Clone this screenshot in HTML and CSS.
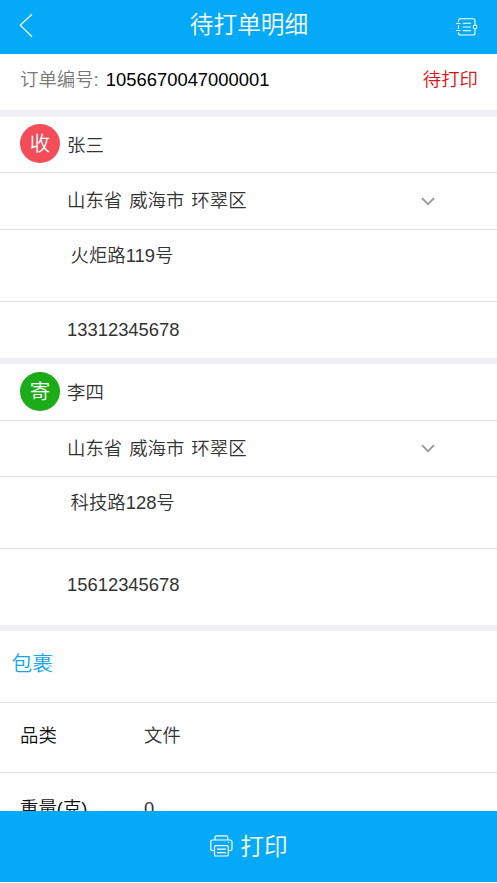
FILE: index.html
```html
<!DOCTYPE html>
<html lang="zh-CN">
<head>
<meta charset="utf-8">
<meta name="viewport" content="width=device-width, initial-scale=1">
<title>待打单明细</title>
<link rel="stylesheet" href="styles.css">
</head>
<body>
<div class="app">
  <header class="navbar">
    <svg class="back" viewBox="0 0 14 25"><path d="M13 1.2 1.2 12.3 13 23.8"/></svg>
    <h1 class="title">待打单明细</h1>
    <svg class="book" viewBox="0 0 22 18"><path d="M2.5 4V2.5Q2.5 .8 4.5 .8H17Q19 .8 19 2.8V6.8M19 11V15Q19 17 17 17H4.5Q2.5 17 2.5 15V14M2.5 7V11M.2 5.5H4.5M.2 12.5H4.5M6.7 5.3H15M6.7 9H15M6.7 12.7H15"/><circle cx="19" cy="8.9" r="1.8"/></svg>
  </header>
  <main class="content">
    <section class="order">
      <div class="order-id"><span class="label">订单编号:</span> <span class="number">1056670047000001</span></div>
      <span class="status">待打印</span>
    </section>
    <section class="contact">
      <div class="row name"><span class="badge receive">收</span><span>张三</span></div>
      <div class="row region"><span>山东省 威海市 环翠区</span><svg class="chevron" viewBox="0 0 14 9"><path d="M1 1.2 7 7.2 13 1.2"/></svg></div>
      <div class="row street">火炬路119号</div>
      <div class="row phone">13312345678</div>
    </section>
    <section class="contact sender">
      <div class="row name"><span class="badge send">寄</span><span>李四</span></div>
      <div class="row region"><span>山东省 威海市 环翠区</span><svg class="chevron" viewBox="0 0 14 9"><path d="M1 1.2 7 7.2 13 1.2"/></svg></div>
      <div class="row street">科技路128号</div>
      <div class="row phone">15612345678</div>
    </section>
    <section class="parcel">
      <h2 class="parcel-title">包裹</h2>
      <div class="field"><span class="key">品类</span><span>文件</span></div>
      <div class="field weight"><span class="key">重量(克)</span><span>0</span></div>
    </section>
  </main>
  <footer class="print">
    <svg class="printer" viewBox="0 0 23 22"><path d="M5 5V2.5Q5 .8 6.8 .8H16Q17.8 .8 17.8 2.5V5M4.5 15.5H2.5Q.8 15.5 .8 13.8V7Q.8 5 2.8 5H20Q22 5 22 7V13.8Q22 15.5 20.3 15.5H18.3M4.5 12Q4.5 10.7 5.8 10.7H17Q18.3 10.7 18.3 12V19.7Q18.3 21 17 21H5.8Q4.5 21 4.5 19.7ZM7 14.2H16M7 17.6H16M18 7.5H19.2"/></svg>
    <span>打印</span>
  </footer>
</div>
</body>
</html>
```
FILE: styles.css
```css
* { box-sizing: border-box; }
body {
  margin: 0;
  background: #fff;
  color: #333;
  font: 350 18.4px/28px "Liberation Sans", "Noto Sans CJK SC", sans-serif;
}
svg { flex: none; fill: none; stroke: #fff; }
.app { display: flex; flex-direction: column; height: 882px; overflow: hidden; }
.navbar {
  display: flex;
  flex: none;
  align-items: center;
  justify-content: space-between;
  height: 54px;
  padding: 0 19px 4px 19px;
  background: #04a9f8;
  color: #fff;
}
.back { width: 14px; height: 25px; stroke-width: 1.2; }
.title { margin: 0 0 0 9px; font-size: 23.7px; font-weight: 350; line-height: 34px; }
.book { width: 22px; height: 18px; margin-top: 3px; stroke-width: 1.1; }
.content { flex: 1; min-height: 0; overflow: hidden; }
.order { display: flex; justify-content: space-between; height: 56px; padding: 12px 19px 0 20px; }
.order-id { word-spacing: 2px; }
.label { color: #777; }
.number { color: #000; }
.status { color: #e60c13; }
.contact, .parcel { border-top: 7px solid #efeff4; }
.row { display: flex; align-items: center; height: 57px; padding-left: 67px; border-bottom: 1px solid #e4e4e6; }
.name { height: 56px; padding: 2px 0 0 20px; }
.badge {
  width: 40px;
  height: 39px;
  margin: 0 7px 4px 0;
  border-radius: 50%;
  color: #fff;
  font-size: 20.5px;
  line-height: 39px;
  text-align: center;
}
.receive { background: #f44d5a; }
.send { background: #1cac19; }
.region { justify-content: space-between; padding-right: 62px; word-spacing: 1.9px; }
.chevron { width: 14px; height: 9px; stroke: #999; stroke-width: 1.9; }
.street { align-items: flex-start; height: 72px; padding: 12px 0 0 70.5px; }
.phone { height: 56px; border: 0; }
.sender { border-top-width: 6px; }
.sender .name { height: 57px; }
.sender .region { height: 56px; }
.sender .phone { height: 76px; padding-bottom: 4px; }
.parcel { border-top-width: 6px; }
.parcel-title {
  height: 72px;
  margin: 0;
  padding: 19px 0 0 11.5px;
  border-bottom: 1px solid #e4e4e6;
  color: #12a5ee;
  font-size: 20.7px;
  font-weight: 350;
}
.field { display: flex; height: 70px; padding: 19px 0 0 20px; border-bottom: 1px solid #e4e4e6; }
.key { width: 124px; color: #111; }
.weight { padding-top: 22px; }
.print {
  display: flex;
  flex: none;
  align-items: center;
  justify-content: center;
  gap: 7px;
  height: 71px;
  padding-left: 1px;
  background: #04a9f8;
  color: #fff;
  font-size: 23.7px;
}
.printer { width: 23px; height: 22px; margin-bottom: 2px; stroke-width: 1.2; }
```
